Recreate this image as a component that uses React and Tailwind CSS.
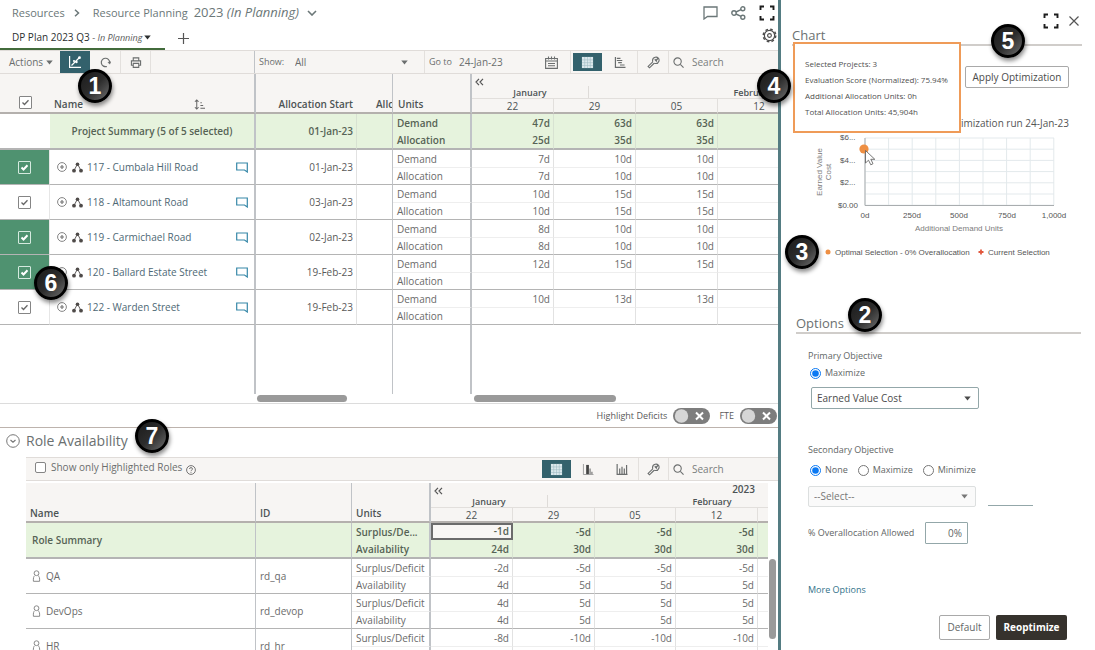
import React from "react";

const LINE = "border-[#c0c3c7]";

function Caret({ className = "" }) {
  return (
    <svg viewBox="0 0 8 5" className={"h-[5px] w-[7px] shrink-0 " + className} fill="currentColor" aria-hidden="true">
      <path d="M0.3 0.3h7.4L4 4.7z" />
    </svg>
  );
}

function Badge({ n, className }) {
  return (
    <span
      className={
        "absolute z-30 flex h-[34px] w-[34px] items-center justify-center rounded-full border-[3px] border-black bg-linear-to-br from-[#1c1c1c] via-[#2c2c2c] to-[#6e6e6e] font-['Liberation_Sans',sans-serif] text-[23px] leading-none font-bold text-white shadow-[1px_3px_4px_rgba(0,0,0,0.45)] " +
        className
      }
    >
      {n}
    </span>
  );
}

function GridIcon() {
  return (
    <svg viewBox="0 0 14 14" className="h-[13px] w-[13px]" aria-hidden="true">
      <rect x="1" y="1" width="12" height="12" fill="#dbe8ec" />
      <path d="M1 4.2h12M1 7.2h12M1 10.2h12M4 1v12M7 1v12M10 1v12" stroke="#9dbac2" strokeWidth="0.6" />
    </svg>
  );
}

function WrenchIcon() {
  return (
    <svg viewBox="0 0 14 14" className="h-[13px] w-[13px]" fill="none" stroke="currentColor" strokeWidth="1.2" aria-hidden="true">
      <path d="M6.2 6.400L1.200 11.200l1.500 1.500 5-4.900" />
      <path d="M6.200 6.400C5.600 4 6.600 1.900 8.800 1.300c1.200-.3 2.500 0 3.400.9.8.9 1 2.200.6 3.400C12.100 7.600 9.900 8.400 7.700 7.800" />
      <path d="M12 2.300L9.800 4.500M8.400 3.600l2.200 2.200" strokeWidth="1.500" />
    </svg>
  );
}

function SearchIcon() {
  return (
    <svg viewBox="0 0 12 12" className="h-[11px] w-[11px] shrink-0" fill="none" stroke="currentColor" strokeWidth="1.2" aria-hidden="true">
      <circle cx="5" cy="5" r="4" />
      <path d="M8 8l3.500 3.500" />
    </svg>
  );
}

function ExpandIcon({ className = "" }) {
  return (
    <svg viewBox="0 0 16 16" className={"h-[16px] w-[16px] " + className} fill="none" stroke="#1d1d1d" strokeWidth="1.900" aria-hidden="true">
      <path d="M1.500 5V1.500H5M11 1.500h3.500V5M14.500 11v3.500H11M5 14.500H1.500V11" />
    </svg>
  );
}

function SearchBox({ id }) {
  return (
    <label htmlFor={id} className="flex min-w-0 flex-1 items-center gap-2 border-l border-[#e3e0dd] pl-1">
      <SearchIcon />
      <input id={id} type="text" placeholder="Search" aria-label="Search" className="w-full min-w-0 bg-transparent text-[10px] leading-4 outline-none placeholder:text-[#7a7d7d]" />
    </label>
  );
}

function Check({ label, inverse = false }) {
  return (
    <span className="mx-auto grid w-[13px] text-[#666]">
      <input
        type="checkbox"
        defaultChecked
        aria-label={label}
        className={
          "h-[13px] w-[13px] appearance-none rounded-[1px] border [grid-area:1/1] " +
          (inverse ? "border-[#d5eadf]" : "border-[#858585] bg-white")
        }
      />
      <svg viewBox="0 0 13 13" className={"pointer-events-none h-[13px] w-[13px] [grid-area:1/1] " + (inverse ? "text-white" : "")} fill="none" stroke="currentColor" strokeWidth={inverse ? 2 : 1.3} aria-hidden="true">
        <path d="M3.500 6.500l2 2 4-4.300" />
      </svg>
    </span>
  );
}

function Months({ year }) {
  return (
    <div className="flex h-6 flex-col overflow-hidden text-[9px] leading-[10px] font-semibold">
      <div className="flex h-3 items-center justify-between pr-[13px] pl-[3px]">
        <button type="button" aria-label="Earlier weeks" className="pt-1">
          <svg viewBox="0 0 9 8" className="h-2 w-[9px]" fill="none" stroke="#555" strokeWidth="1.200" aria-hidden="true">
            <path d="M4 0.800L1 4l3 3.200M8 0.800L5 4l3 3.200" />
          </svg>
        </button>
        <span className="text-[10px]">{year}</span>
      </div>
      <div className="flex h-3">
        <span className="w-[117px] shrink-0 border-r border-[#dedbd8] pt-[2px] text-center">January</span>
        <span className="w-[328px] shrink-0 pt-[2px] text-center">February</span>
      </div>
    </div>
  );
}

const projects = [
  { name: "117 - Cumbala Hill Road", start: "01-Jan-23", on: true, d: ["7d", "10d", "10d"], a: ["7d", "10d", "10d"] },
  { name: "118 - Altamount Road", start: "03-Jan-23", on: false, d: ["10d", "15d", "15d"], a: ["10d", "15d", "15d"] },
  { name: "119 - Carmichael Road", start: "02-Jan-23", on: true, d: ["8d", "10d", "10d"], a: ["8d", "10d", "10d"] },
  { name: "120 - Ballard Estate Street", start: "19-Feb-23", on: true, d: ["12d", "15d", "15d"], a: ["", "", ""] },
  { name: "122 - Warden Street", start: "19-Feb-23", on: false, d: ["10d", "13d", "13d"], a: ["", "", ""] },
];

const roles = [
  { name: "QA", id: "rd_qa", s: ["-2d", "-5d", "-5d", "-5d"], a: ["4d", "5d", "5d", "5d"] },
  { name: "DevOps", id: "rd_devop", s: ["4d", "5d", "5d", "5d"], a: ["4d", "5d", "5d", "5d"] },
  { name: "HR", id: "rd_hr", s: ["-8d", "-10d", "-10d", "-10d"], a: ["4d", "5d", "5d", "5d"] },
];

const weeks = ["22", "29", "05", "12"];
const TOP = "h-[18px] border-b border-b-[#eeeeee] ";
const BOTTOM = "h-[17px] border-b border-b-[#b4b4b4] ";
const VAL = "border-r border-r-[#e2e2e2] pr-[3px] text-right ";

function ProjectTable() {
  return (
    <table className="w-full table-fixed border-separate border-spacing-0 text-[10px] leading-[14px] text-[#6a6a6a]">
      <colgroup>
        <col className="w-[50px]" />
        <col className="w-[206px]" />
        <col className="w-[101px]" />
        <col className="w-[36px]" />
        <col className="w-[79px]" />
        <col className="w-[82px]" />
        <col className="w-[82px]" />
        <col className="w-[82px]" />
        <col />
      </colgroup>
      <thead className="bg-[#f7f5f3] text-[#4c5354]">
        <tr>
          <th rowSpan={2} className="border-b-2 border-[#b4b0ad] pb-[3px] align-bottom"><Check label="Select all projects" /></th>
          <th rowSpan={2} className={"border-r-2 border-b-2 border-b-[#b4b0ad] pr-[49px] pb-px pl-1 text-left align-bottom font-semibold " + LINE}>
            <span className="flex items-center justify-between">
              Name
              <svg viewBox="0 0 12 12" className="h-[11px] w-[11px]" fill="none" stroke="#666" strokeWidth="1.100" aria-hidden="true">
                <path d="M3 1v10M1 3l2-2 2 2M1 9l2 2 2-2M7 4h1.500M7 7h3M7 10h5" />
              </svg>
            </span>
          </th>
          <th rowSpan={2} className="border-b-2 border-[#b4b0ad] pr-1 pb-px text-right align-bottom font-semibold">Allocation Start</th>
          <th rowSpan={2} className={"overflow-hidden border-r border-b-2 border-b-[#b4b0ad] pb-px pl-[19px] text-left align-bottom font-semibold whitespace-nowrap " + LINE}>Allc</th>
          <th rowSpan={2} className={"border-r-2 border-b-2 border-b-[#b4b0ad] pb-px pl-[5px] text-left align-bottom font-semibold " + LINE}>Units</th>
          <th colSpan={4} className="h-[25px] overflow-hidden border-b border-[#e2dfdc]"><Months /></th>
        </tr>
        <tr>
          {weeks.map((w, i) => (
            <th key={w} className={"h-[15px] overflow-hidden border-b-2 border-b-[#b4b0ad] leading-3 font-normal " + (i < 3 ? "border-r border-r-[#e2dfdc]" : "")}>
              <div className={i < 3 ? "" : "w-[82px]"}>{w}</div>
            </th>
          ))}
        </tr>
      </thead>
      <tbody>
        <tr className="bg-[#e6f3dd] font-semibold text-[#566355]">
          <td rowSpan={2} className="border-b-2 border-[#b4b4b4] bg-white" />
          <td rowSpan={2} className={"border-r-2 border-b-2 border-b-[#b4b4b4] text-center " + LINE}>Project Summary (5 of 5 selected)</td>
          <td rowSpan={2} className="border-r border-b-2 border-r-[#d8e2d2] border-b-[#b4b4b4] pr-[3px] text-right">01-Jan-23</td>
          <td rowSpan={2} className={"border-r border-b-2 border-b-[#b4b4b4] " + LINE} />
          <td className={"h-[17px] border-r-2 pl-1 " + LINE}>Demand</td>
          {["47d", "63d", "63d"].map((v, i) => <td key={i} className="border-r border-[#d8e2d2] pr-[3px] text-right">{v}</td>)}
          <td />
        </tr>
        <tr className="bg-[#e6f3dd] font-semibold text-[#566355]">
          <td className={"h-[19px] border-r-2 border-b-2 border-b-[#b4b4b4] pl-1 " + LINE}>Allocation</td>
          {["25d", "35d", "35d"].map((v, i) => <td key={i} className="border-r border-b-2 border-r-[#d8e2d2] border-b-[#b4b4b4] pr-[3px] text-right">{v}</td>)}
          <td className="border-b-2 border-[#b4b4b4]" />
        </tr>
        {projects.map((p) => (
          <React.Fragment key={p.name}>
            <tr>
              <td rowSpan={2} className={"border-r border-b border-r-[#e6e6e6] border-b-[#b4b4b4] " + (p.on ? "bg-[#4f9270]" : "")}>
                <Check label={"Select " + p.name} inverse={p.on} />
              </td>
              <td rowSpan={2} className={"border-r-2 border-b border-b-[#b4b4b4] pr-[6px] pl-[7px] " + LINE}>
                <div className="flex items-center">
                  <button type="button" aria-label={"Expand " + p.name}>
                    <svg viewBox="0 0 10 10" className="h-[10px] w-[10px]" fill="none" stroke="#777" strokeWidth="0.900" aria-hidden="true">
                      <circle cx="5" cy="5" r="4.400" />
                      <path d="M5 3v4M3 5h4" strokeWidth="1.200" />
                    </svg>
                  </button>
                  <svg viewBox="0 0 11 11" className="ml-[5px] h-[11px] w-[11px]" fill="#4e4a48" aria-hidden="true">
                    <path d="M5.500 2L2 8.500M5.500 2L9 8.500" stroke="#4e4a48" strokeWidth="0.900" />
                    <circle cx="5.500" cy="2.200" r="1.800" />
                    <circle cx="2" cy="8.700" r="1.900" />
                    <circle cx="9" cy="8.700" r="1.900" />
                  </svg>
                  <a href="#project" className="ml-1 text-[#4e6875]">{p.name}</a>
                  <button type="button" aria-label={"Comments for " + p.name} className="ml-auto">
                    <svg viewBox="0 0 12 11" className="h-[11px] w-3" fill="none" stroke="#3788a8" strokeWidth="1.200" aria-hidden="true">
                      <path d="M0.700 1h10.600v9L8.500 8H0.700z" />
                    </svg>
                  </button>
                </div>
              </td>
              <td rowSpan={2} className="border-r border-b border-r-[#e2e2e2] border-b-[#b4b4b4] pr-[3px] text-right text-[#5a5a5a]">{p.start}</td>
              <td rowSpan={2} className={"border-r border-b border-b-[#b4b4b4] " + LINE} />
              <td className={TOP + "border-r-2 pl-1 " + LINE}>Demand</td>
              {p.d.map((v, i) => <td key={i} className={TOP + VAL}>{v}</td>)}
              <td className={TOP} />
            </tr>
            <tr>
              <td className={BOTTOM + "border-r-2 pl-1 " + LINE}>Allocation</td>
              {p.a.map((v, i) => <td key={i} className={BOTTOM + VAL}>{v}</td>)}
              <td className={BOTTOM} />
            </tr>
          </React.Fragment>
        ))}
        <tr aria-hidden="true">
          <td className="h-[69px]" />
          <td className={"border-r-2 " + LINE} />
          <td />
          <td className={"border-r " + LINE} />
          <td className={"border-r-2 " + LINE} />
          <td colSpan={4} />
        </tr>
      </tbody>
    </table>
  );
}

function RoleTable() {
  return (
    <table className="w-full table-fixed border-separate border-spacing-0 text-[10px] leading-[14px] text-[#6a6a6a]">
      <colgroup>
        <col className="w-[230px]" />
        <col className="w-[96px]" />
        <col className="w-[79px]" />
        <col className="w-[82px]" />
        <col className="w-[82px]" />
        <col className="w-[81px]" />
        <col className="w-[82px]" />
        <col />
      </colgroup>
      <thead className="bg-[#f7f5f3] text-[#4c5354]">
        <tr>
          <th rowSpan={2} className={"border-r border-b-2 border-b-[#b4b0ad] pb-px pl-1 text-left align-bottom font-semibold " + LINE}>Name</th>
          <th rowSpan={2} className={"border-r border-b-2 border-b-[#b4b0ad] pb-px pl-1 text-left align-bottom font-semibold " + LINE}>ID</th>
          <th rowSpan={2} className={"border-r-2 border-b-2 border-b-[#b4b0ad] pb-px pl-1 text-left align-bottom font-semibold " + LINE}>Units</th>
          <th colSpan={5} className="h-[25px] overflow-hidden border-b border-[#e2dfdc]"><Months year="2023" /></th>
        </tr>
        <tr>
          {weeks.map((w) => (
            <th key={w} className="h-[15px] border-r border-b-2 border-r-[#e2dfdc] border-b-[#b4b0ad] leading-3 font-normal">{w}</th>
          ))}
          <th className="border-b-2 border-[#b4b0ad]" />
        </tr>
      </thead>
      <tbody>
        <tr className="bg-[#e6f3dd] font-semibold text-[#566355]">
          <td rowSpan={2} className={"border-r border-b-2 border-b-[#b4b4b4] pl-[6px] " + LINE}>Role Summary</td>
          <td rowSpan={2} className={"border-r border-b-2 border-b-[#b4b4b4] " + LINE} />
          <td className={"h-[17px] truncate border-r-2 pl-1 " + LINE}>Surplus/De...</td>
          <td className="border-2 border-[#6b6b6b] bg-[#f8f6f4] pr-[2px] text-right leading-[13px]">-1d</td>
          {["-5d", "-5d", "-5d"].map((v, i) => <td key={i} className="border-r border-[#d8e2d2] pr-[3px] text-right">{v}</td>)}
          <td />
        </tr>
        <tr className="bg-[#e6f3dd] font-semibold text-[#566355]">
          <td className={"h-[19px] border-r-2 border-b-2 border-b-[#b4b4b4] pl-1 " + LINE}>Availability</td>
          {["24d", "30d", "30d", "30d"].map((v, i) => <td key={i} className="border-r border-b-2 border-r-[#d8e2d2] border-b-[#b4b4b4] pr-[3px] text-right">{v}</td>)}
          <td className="border-b-2 border-[#b4b4b4]" />
        </tr>
        {roles.map((r) => (
          <React.Fragment key={r.name}>
            <tr>
              <td rowSpan={2} className={"border-r border-b border-b-[#b4b4b4] pl-[6px] " + LINE}>
                <div className="flex items-center gap-[5px]">
                  <svg viewBox="0 0 9 12" className="h-3 w-[9px]" fill="none" stroke="#8a8a8a" strokeWidth="1" aria-hidden="true">
                    <circle cx="4.500" cy="3.200" r="2.400" />
                    <path d="M2.800 5.700C1.600 6.500 1.200 8 1.400 11.300h6.200c.2-3.300-.2-4.800-1.400-5.600" />
                  </svg>
                  {r.name}
                </div>
              </td>
              <td rowSpan={2} className={"border-r border-b border-b-[#b4b4b4] pl-1 " + LINE}>{r.id}</td>
              <td className={TOP + "border-r-2 pl-1 whitespace-nowrap " + LINE}>Surplus/Deficit</td>
              {r.s.map((v, i) => <td key={i} className={TOP + VAL}>{v}</td>)}
              <td className={TOP} />
            </tr>
            <tr>
              <td className={BOTTOM + "border-r-2 pl-1 " + LINE}>Availability</td>
              {r.a.map((v, i) => <td key={i} className={BOTTOM + VAL}>{v}</td>)}
              <td className={BOTTOM} />
            </tr>
          </React.Fragment>
        ))}
      </tbody>
    </table>
  );
}

function Toggle({ id, label }) {
  return (
    <label htmlFor={id} className="flex items-center gap-[6px]">
      {label}
      <span className="grid">
        <input id={id} type="checkbox" role="switch" className="h-4 w-[37px] appearance-none rounded-full bg-[#7d7d7d] [grid-area:1/1]" />
        <svg viewBox="0 0 37 16" className="pointer-events-none h-4 w-[37px] [grid-area:1/1]" aria-hidden="true">
          <circle cx="8.500" cy="8" r="6.700" fill="#d6d6d6" />
          <path d="M23 4.500l7 7M30 4.500l-7 7" stroke="#fff" strokeWidth="2" />
        </svg>
      </span>
    </label>
  );
}

function Planner() {
  return (
    <main className="relative flex min-w-0 flex-1 flex-col overflow-hidden">
      <header className="flex h-[26px] shrink-0 items-center pr-[3px] pl-3 text-[#6b7778]">
        <a href="#resources" className="text-[11px]">Resources</a>
        <svg viewBox="0 0 6 8" className="ml-[9px] h-2 w-[6px]" fill="none" stroke="currentColor" strokeWidth="1.500" aria-hidden="true"><path d="M1 0.800L4.500 4 1 7.200" /></svg>
        <a href="#planning" className="ml-[13px] text-[11px]">Resource Planning</a>
        <button type="button" className="ml-[6px] flex items-center gap-2 text-[13px]">
          <span>2023 <i>(In Planning)</i></span>
          <svg viewBox="0 0 10 6" className="h-[6px] w-[10px]" fill="none" stroke="currentColor" strokeWidth="1.600" aria-hidden="true"><path d="M1 1l4 4 4-4" /></svg>
        </button>
        <button type="button" aria-label="Comments" className="ml-auto">
          <svg viewBox="0 0 15 14" className="h-[14px] w-[15px]" fill="none" stroke="currentColor" strokeWidth="1.300" aria-hidden="true"><path d="M1 1h13v9.500H4.500L1 13z" /></svg>
        </button>
        <button type="button" aria-label="Share" className="ml-[13px]">
          <svg viewBox="0 0 15 14" className="h-[14px] w-[15px]" fill="none" stroke="currentColor" strokeWidth="1.400" aria-hidden="true">
            <circle cx="3" cy="7" r="2.200" /><circle cx="11.800" cy="2.800" r="2" /><circle cx="11.800" cy="11.200" r="2" /><path d="M5 6l5-2.300M5 8l5 2.300" />
          </svg>
        </button>
        <button type="button" aria-label="Full screen" className="ml-[13px]"><ExpandIcon /></button>
      </header>

      <div className="flex h-6 shrink-0 items-stretch justify-between pr-px">
        <div className="flex">
          <button type="button" className="flex w-[165px] items-center border-b-2 border-[#426b3b] pl-3 text-[10px] text-[#2b2f2f]">
            <span className="whitespace-nowrap">DP Plan 2023 Q3 <span className="text-[9px] text-[#5a5a5a]">- <i>In Planning</i></span></span>
            <Caret className="ml-[2px]" />
          </button>
          <button type="button" aria-label="Add plan" className="ml-[13px] text-[#555]">
            <svg viewBox="0 0 11 11" className="h-[11px] w-[11px]" stroke="currentColor" strokeWidth="1.200" aria-hidden="true"><path d="M5.500 0v11M0 5.500h11" /></svg>
          </button>
        </div>
        <button type="button" aria-label="Settings" className="self-start pt-[2px]">
          <svg viewBox="0 0 16 16" className="h-[15px] w-[15px]" fill="none" stroke="#4d4d4d" aria-hidden="true">
            <circle cx="8" cy="8" r="5.500" strokeWidth="1.300" />
            <circle cx="8" cy="8" r="6.700" strokeWidth="1.500" strokeDasharray="2.800 2.460" />
            <circle cx="8" cy="8" r="2" strokeWidth="1.200" />
          </svg>
        </button>
      </div>

      <div className="flex h-6 shrink-0 items-stretch border-y border-[#e0dcd9] bg-[#f7f5f3] text-[10px] text-[#6b6e6e]">
        <button type="button" className="flex w-[60px] items-center gap-[3px] pl-[9px]">Actions <Caret /></button>
        <button type="button" aria-label="Optimization chart" className="flex w-[30px] items-center justify-center bg-[#33616c]">
          <svg viewBox="0 0 12 12" className="h-3 w-3" fill="none" stroke="#fff" strokeWidth="1.200" aria-hidden="true">
            <path d="M0.600 0v11.400H12M2.500 9.500L10.500 1.500" /><circle cx="5" cy="5" r="1.100" fill="#fff" stroke="none" /><circle cx="7.500" cy="6" r="1.200" fill="#fff" stroke="none" /><circle cx="10.500" cy="1.700" r="1.400" fill="#fff" stroke="none" />
          </svg>
        </button>
        <button type="button" aria-label="Refresh" className="flex w-[31px] items-center justify-center border-r border-[#e3e0dd]">
          <svg viewBox="0 0 12 12" className="h-[11px] w-[11px]" fill="none" stroke="currentColor" strokeWidth="1.300" aria-hidden="true"><path d="M7.500 10.300A4.600 4.600 0 1 1 10.600 6" /><path d="M8.500 5.500l2.100 2.300L12 5" fill="currentColor" strokeWidth="0.500" /></svg>
        </button>
        <button type="button" aria-label="Print" className="flex w-[30px] items-center justify-center border-r border-[#e3e0dd]">
          <svg viewBox="0 0 12 12" className="h-[11px] w-3" fill="none" stroke="currentColor" strokeWidth="1.200" aria-hidden="true"><path d="M3 4V1h6v3M3 9H1V4.200h10V9H9M3 7h6v4.300H3z" /></svg>
        </button>
        <span className={"w-[104px] border-r " + LINE} />
        <div className="flex w-[170px] items-center border-r border-[#e3e0dd] pr-4 pl-1">
          <label htmlFor="show" className="w-9 shrink-0 text-[9px]">Show:</label>
          <select id="show" className="min-w-0 flex-1 appearance-none bg-transparent text-[10px]"><option>All</option></select>
          <Caret />
        </div>
        <div className="flex w-[146px] items-center border-r border-[#e3e0dd] pr-3 pl-1">
          <label htmlFor="goto" className="w-[30px] shrink-0 text-[9px]">Go to</label>
          <input id="goto" type="text" defaultValue="24-Jan-23" className="w-full min-w-0 flex-1 bg-transparent text-[10px]" />
          <button type="button" aria-label="Pick a date">
            <svg viewBox="0 0 13 13" className="h-[13px] w-[13px]" fill="none" stroke="currentColor" strokeWidth="1.100" aria-hidden="true"><path d="M0.600 2.500h11.800v9.900H0.600zM0.600 5h11.800M3.500 0.500v3M6.500 0.500v3M9.500 0.500v3M3 7.500h7M3 9.700h7" /></svg>
          </button>
        </div>
        <button type="button" aria-label="Grid view" className="my-[2px] ml-[2px] flex w-[29px] items-center justify-center bg-[#33616c]"><GridIcon /></button>
        <button type="button" aria-label="Gantt view" className="flex w-[35px] items-center justify-center">
          <svg viewBox="0 0 12 12" className="h-[11px] w-3" fill="none" stroke="currentColor" strokeWidth="1.300" aria-hidden="true"><path d="M1 0v11.300h11M2.500 1.500h4M2.500 3.800h6M4 6.200h4M6 8.700h5" /></svg>
        </button>
        <button type="button" aria-label="Tools" className="flex w-[31px] items-center justify-center border-l border-[#e3e0dd]"><WrenchIcon /></button>
        <SearchBox id="search-projects" />
      </div>

      <section aria-label="Projects" className="shrink-0">
        <ProjectTable />
        <div className="flex h-[10px] items-center border-b border-[#dcdcdc]">
          <div className="ml-[257px] h-[7px] w-[90px] rounded-full bg-[#9a9a9a]" />
          <div className="ml-[127px] h-[7px] w-[142px] rounded-full bg-[#9a9a9a]" />
        </div>
        <div className="flex h-6 items-center justify-end gap-[9px] border-b border-[#bdb3ad] pr-px text-[9px] text-[#5a5a5a]">
          <Toggle id="deficits" label="Highlight Deficits" />
          <Toggle id="fte" label="FTE" />
        </div>
      </section>

      <section aria-label="Role Availability" className="flex min-h-0 flex-1 flex-col">
        <h2 className="flex h-[29px] shrink-0 items-center gap-[6px] pb-1 pl-[6px] text-[14px] text-[#6b7070]">
          <button type="button" aria-label="Collapse Role Availability">
            <svg viewBox="0 0 14 14" className="h-[14px] w-[14px]" fill="none" stroke="#777" strokeWidth="1" aria-hidden="true"><circle cx="7" cy="7" r="6.300" /><path d="M4.500 6L7 8.200 9.500 6" strokeWidth="1.200" /></svg>
          </button>
          Role Availability
        </h2>
        <div className="ml-[26px] flex h-6 shrink-0 items-stretch justify-between border-y border-[#e0dcd9] bg-[#f7f5f3] text-[10px] text-[#6b6e6e]">
          <div className="flex items-center pb-[3px] pl-[9px]">
            <input id="highlighted" type="checkbox" className="mr-[5px] h-[11px] w-[11px] appearance-none rounded-[2px] border border-[#858585] bg-white" />
            <label htmlFor="highlighted">Show only Highlighted Roles</label>
            <svg viewBox="0 0 10 10" className="mt-1 ml-1 h-[10px] w-[10px]" fill="none" stroke="#666" strokeWidth="0.900" aria-hidden="true"><circle cx="5" cy="5" r="4.400" /><path d="M3.500 4c0-1.900 3-1.900 3 0C6.500 5 5 5 5 6.200M5 7v.8" /></svg>
          </div>
          <div className="flex w-[236px] items-stretch">
            <button type="button" aria-label="Role grid view" className="my-[2px] flex w-[29px] items-center justify-center bg-[#33616c]"><GridIcon /></button>
            <button type="button" aria-label="Histogram view" className="flex w-[34px] items-center justify-center">
              <svg viewBox="0 0 12 12" className="h-[11px] w-3" aria-hidden="true"><path d="M1 0v11.500h11" stroke="#999" fill="none" /><path d="M4 1h3v10H4z" fill="#444" /><path d="M7.500 5H9v6H7.500zM9.500 8.500H11V11H9.500z" fill="#888" /></svg>
            </button>
            <button type="button" aria-label="Bar view" className="flex w-[33px] items-center justify-center">
              <svg viewBox="0 0 12 12" className="h-[11px] w-3" fill="none" stroke="currentColor" strokeWidth="1.300" aria-hidden="true"><path d="M0.700 0v11.300H12M3.500 5v6M6 3v8M8.500 5v6M11 1v10" /></svg>
            </button>
            <button type="button" aria-label="Role tools" className="flex w-[30px] items-center justify-center border-l border-[#e3e0dd]"><WrenchIcon /></button>
            <SearchBox id="search-roles" />
          </div>
        </div>
        <div className="mt-[2px] flex min-h-0 flex-1 overflow-hidden pl-[26px]">
          <div className="min-w-0 flex-1"><RoleTable /></div>
          <div className="w-[10px] shrink-0 pt-[76px] pl-px"><div className="h-[80px] w-[7px] rounded-full bg-[#9a9a9a]" /></div>
        </div>
      </section>

      <Badge n="1" className="top-[69px] left-[78px]" />
      <Badge n="6" className="top-[266px] left-[34px]" />
      <Badge n="7" className="top-[419px] left-[135px]" />
    </main>
  );
}

function Chart() {
  const cols = [0, 1, 2, 3, 4, 5, 6, 7, 8];
  const rows = [0, 1, 2, 3, 4, 5, 6];
  return (
    <svg viewBox="0 0 290 130" className="h-[130px] w-[290px] font-['Liberation_Sans',sans-serif] text-[8px]" fill="#555" role="img" aria-label="Earned Value Cost by Additional Demand Units">
      {cols.map((c) => <path key={c} d={`M${73 + c * 23.6} 7v67`} stroke="#e3e9ec" />)}
      {rows.map((r) => <path key={r} d={`M73 ${7 + r * 11.2}h189`} stroke="#e3e9ec" />)}
      <path d="M73 7v67.500h189" fill="none" stroke="#a9adaf" />
      <text x="48" y="9">$6...</text>
      <text x="48" y="32">$4...</text>
      <text x="48" y="54">$2...</text>
      <text x="66" y="77" textAnchor="end">$0.00</text>
      <g textAnchor="middle">
        <text x="73" y="87">0d</text>
        <text x="120" y="87">250d</text>
        <text x="167" y="87">500d</text>
        <text x="215" y="87">750d</text>
        <text x="262" y="87">1,000d</text>
        <g fill="#7c7c7c">
          <text x="167" y="100">Additional Demand Units</text>
          <text transform="translate(30 41) rotate(-90)">Earned Value</text>
          <text transform="translate(39 41) rotate(-90)">Cost</text>
        </g>
      </g>
      <circle cx="72" cy="18" r="4.600" fill="#ee8f43" />
      <path d="M73.500 19.500v12.500l3-2.800 2.300 4.600 2.200-1.100-2.200-4.400h4z" fill="#fff" stroke="#555" strokeWidth="0.800" />
      <circle cx="36" cy="121" r="2.500" fill="#ee8f43" />
      <text x="43" y="124">Optimal Selection - 0% Overallocation</text>
      <path d="M189 118.500v5M186.500 121h5" stroke="#e2583e" strokeWidth="1.800" />
      <text x="196" y="124">Current Selection</text>
    </svg>
  );
}

function Radio({ id, name, label, checked = false }) {
  return (
    <label htmlFor={id} className="flex items-center gap-1">
      <input id={id} type="radio" name={name} defaultChecked={checked} className="m-0 h-[11px] w-[11px] accent-[#0b79f3]" />
      {label}
    </label>
  );
}

function OptimizationPanel() {
  return (
    <aside className="relative w-[317px] shrink-0 border-l-[3px] border-[#547c82] bg-white text-[9px] text-[#626666]">
      <div className="flex h-[29px] items-end justify-end gap-[10px] pr-4">
        <button type="button" aria-label="Expand panel"><ExpandIcon /></button>
        <button type="button" aria-label="Close panel" className="pb-[3px]">
          <svg viewBox="0 0 10 10" className="h-[10px] w-[10px]" stroke="#555" strokeWidth="1.200" aria-hidden="true"><path d="M0.500 0.500l9 9M9.500 0.500l-9 9" /></svg>
        </button>
      </div>
      <section aria-label="Chart" className="flex flex-col pr-[13px] pl-[11px]">
        <h2 className="h-[17px] border-b-2 border-[#d0cdca] text-[13px] leading-[13px] text-[#6b7070]">Chart</h2>
        <button type="button" className="mt-5 mr-[13px] h-[22px] w-[104px] self-end rounded-[2px] border border-[#a9a9a9] text-[10px] text-[#4b4b4b]">Apply Optimization</button>
        <p className="mt-[27px] pr-[13px] text-right text-[10px] leading-[16px] text-[#555]">Optimization run 24-Jan-23</p>
        <Chart />
      </section>
      <section aria-label="Options" className="mt-[53px] flex flex-col pr-[14px] pl-[15px]">
        <h2 className="h-[20px] border-b-2 border-[#d0cdca] text-[13px] leading-[18px] text-[#6b7070]">Options</h2>
        <div className="flex flex-col pl-3">
          <p className="mt-[15px] leading-[14px]">Primary Objective</p>
          <div className="mt-[3px] flex h-[14px] items-center pl-[2px]"><Radio id="p-max" name="primary" label="Maximize" checked /></div>
          <span className="mt-[7px] ml-[3px] grid w-[168px] items-center text-[#4b4b4b]">
            <select aria-label="Primary Objective" className="h-[22px] w-full appearance-none rounded-[2px] border border-[#93a7a9] bg-white pl-[5px] text-[10px] [grid-area:1/1]"><option>Earned Value Cost</option></select>
            <Caret className="pointer-events-none mr-2 justify-self-end [grid-area:1/1]" />
          </span>
          <p className="mt-[34px] leading-[14px]">Secondary Objective</p>
          <div className="mt-[6px] flex h-[14px] items-center gap-[10px] pl-[2px]">
            <Radio id="s-none" name="secondary" label="None" checked />
            <Radio id="s-max" name="secondary" label="Maximize" />
            <Radio id="s-min" name="secondary" label="Minimize" />
          </div>
          <div className="mt-[9px] flex gap-3">
            <span className="grid w-[168px] items-center text-[#777]">
              <select disabled aria-label="Secondary Objective" className="h-[21px] w-full appearance-none rounded-[2px] border border-[#dcdfdf] bg-[#fafafa] pl-[5px] text-[10px] [grid-area:1/1]"><option>--Select--</option></select>
              <Caret className="pointer-events-none mr-2 justify-self-end [grid-area:1/1]" />
            </span>
            <input type="text" aria-label="Secondary Objective value" className="h-5 w-[45px] border-b border-[#93a7a9]" />
          </div>
          <div className="mt-[15px] flex items-center justify-between pr-[113px]">
            <label htmlFor="over" className="whitespace-nowrap">% Overallocation Allowed</label>
            <input id="over" type="text" defaultValue="0%" className="h-[22px] w-[43px] rounded-[1px] border border-[#93a7a9] pr-[5px] text-right text-[10px]" />
          </div>
          <a href="#more" className="mt-[38px] self-start leading-[16px] text-[#32728a]">More Options</a>
          <div className="mt-[17px] flex justify-end gap-[6px] pr-[14px]">
            <button type="button" className="h-[25px] w-[51px] rounded-[2px] border border-[#a9a9a9] text-[10px]">Default</button>
            <button type="button" className="h-[25px] w-[71px] rounded-[2px] bg-[#36322d] text-[10px] font-bold text-white">Reoptimize</button>
          </div>
        </div>
      </section>

      <div role="tooltip" className="absolute top-[42px] left-3 z-20 h-[91px] w-[168px] border-2 border-[#ef9b58] bg-white pt-[12px] pl-[10px] text-[8px] leading-4 whitespace-nowrap text-[#4f4f4f]">
        <p>Selected Projects: 3</p>
        <p>Evaluation Score (Normalized): 75.94%</p>
        <p>Additional Allocation Units: 0h</p>
        <p>Total Allocation Units: 45,904h</p>
      </div>
      <Badge n="4" className="top-[69px] -left-[24px]" />
      <Badge n="5" className="top-[24px] left-[210px]" />
      <Badge n="3" className="top-[235px] left-1" />
      <Badge n="2" className="top-[298px] left-[67px]" />
    </aside>
  );
}

export default function App() {
  return (
    <div className="flex h-screen overflow-hidden bg-white font-['Open_Sans','Noto_Sans',sans-serif]">
      <Planner />
      <OptimizationPanel />
    </div>
  );
}
